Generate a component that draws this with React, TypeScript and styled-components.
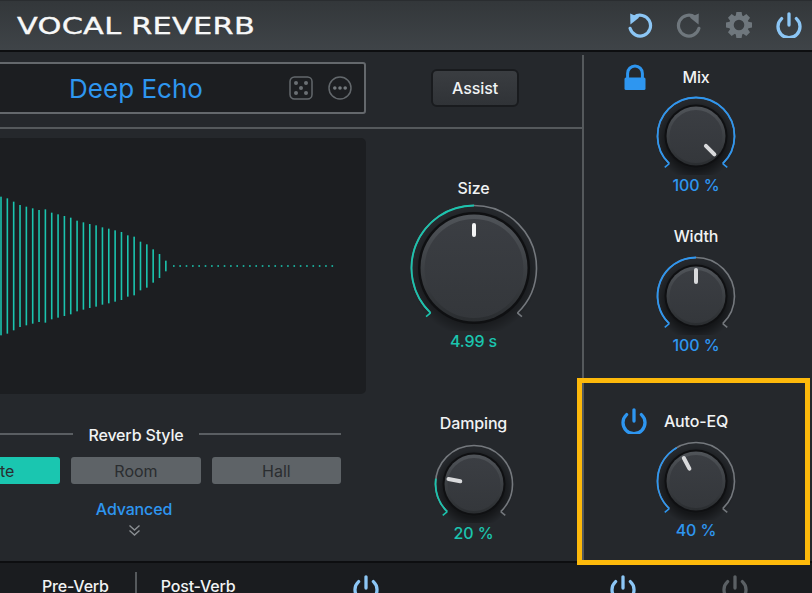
import React, { useId } from "react";
import styled, { createGlobalStyle } from "styled-components";

const TEAL = "#1bc4ae";
const BLUE = "#2e96f0";
const SKY = "#8cc6f5";
const GREY = "#6f777d";

const Global = createGlobalStyle`
  html, body { margin: 0; padding: 0; background: #25282c; }
  body { font-family: Inter, "Liberation Sans", sans-serif; overflow: hidden; }
`;

const Frame = styled.div`
  position: relative;
  width: 812px;
  height: 593px;
  overflow: hidden;
  display: flex;
  flex-direction: column;
  background: #25282c;
  color: #f1f3f4;
`;

const Header = styled.header`
  flex: none;
  height: 52px;
  box-sizing: border-box;
  display: flex;
  align-items: center;
  padding: 0 10px 2px 17px;
  border-top: 1px solid #2a2d30;
  border-bottom: 2px solid #0d0e10;
  background: linear-gradient(180deg, #33373a 0%, #3f4448 100%);
`;

const Logo = styled.div`
  flex: 1;
  padding-top: 2px;
  font-family: "DejaVu Sans", sans-serif;
  font-size: 23px;
  line-height: 28px;
  letter-spacing: 0.2px;
  color: #f7f8f8;
  white-space: nowrap;
  transform-origin: left center;
  transform: scaleX(1.32);
  -webkit-text-stroke: 0.35px #f7f8f8;
`;

const HeaderIcons = styled.div`
  display: flex;
  align-items: center;
  gap: 23px;
`;

const Main = styled.main`
  flex: 1;
  min-height: 0;
  display: flex;
  margin-left: -94px;
`;

const Left = styled.div`
  flex: none;
  width: 676px;
  display: flex;
  flex-direction: column;
`;

const TopRow = styled.div`
  flex: none;
  height: 75px;
  display: flex;
  border-bottom: 2px solid #55595c;
`;

const PresetCell = styled.div`
  flex: none;
  width: 460px;
  padding-top: 10px;
`;

const Preset = styled.div`
  position: relative;
  height: 52px;
  box-sizing: border-box;
  display: flex;
  align-items: center;
  justify-content: center;
  background: #1c1e21;
  border: 2px solid #64686c;
  border-radius: 3px;
  font-size: 26px;
  color: ${BLUE};
`;

const PresetTools = styled.div`
  position: absolute;
  right: 12px;
  top: 12px;
  display: flex;
  gap: 15px;
`;

const AssistCell = styled.div`
  flex: 1;
  display: flex;
  justify-content: center;
  padding: 17px 0 0 2px;
`;

const AssistButton = styled.button`
  width: 88px;
  height: 38px;
  border: 2px solid #191b1e;
  border-radius: 6px;
  background: linear-gradient(180deg, #3a3d41, #303337);
  color: #f1f3f4;
  font: 500 16px Inter, sans-serif;
  letter-spacing: -0.1px;
`;

const BottomRow = styled.div`
  flex: 1;
  display: flex;
`;

const WaveColumn = styled.div`
  flex: none;
  width: 460px;
  padding-top: 9px;
`;

const WavePanel = styled.div`
  height: 256px;
  background: #1c1e21;
  border-radius: 5px;
  overflow: hidden;
`;

const StyleSection = styled.section`
  padding: 31px 25px 0;
`;

const StyleTitle = styled.div`
  display: flex;
  align-items: center;
  gap: 15px;
  font-size: 16px;
  font-weight: 500;
  line-height: 20px;
  letter-spacing: -0.15px;
  &::before, &::after {
    content: "";
    flex: 1;
    height: 2px;
    background: #5a5e62;
    margin-top: -3px;
  }
`;

const StyleButtons = styled.div`
  display: grid;
  grid-template-columns: repeat(3, 1fr);
  gap: 11px;
  margin-top: 12px;
`;

const StyleButton = styled.div<{ $on?: boolean }>`
  height: 27px;
  border-radius: 3px;
  display: flex;
  align-items: center;
  justify-content: center;
  font-size: 16px;
  background: ${(p) => (p.$on ? "#1ac6b0" : "#5e6367")};
  color: #2a2d30;
`;

const Advanced = styled.div`
  display: flex;
  flex-direction: column;
  align-items: center;
  margin-top: 15px;
  padding-right: 4px;
  color: ${BLUE};
  font-size: 16px;
  font-weight: 500;
  line-height: 20px;
  letter-spacing: -0.15px;
`;

const KnobColumn = styled.div`
  flex: 1;
  display: flex;
  flex-direction: column;
  align-items: center;
  padding: 49px 1px 0 0;
`;

const Right = styled.div`
  flex: 1;
  margin-top: 3px;
  padding: 12px 4px 0 0;
  border-left: 2px solid #55595c;
  display: flex;
  flex-direction: column;
`;

const KnobBlock = styled.div<{ $top?: number }>`
  display: flex;
  flex-direction: column;
  align-items: center;
  align-self: stretch;
  margin-top: ${(p) => p.$top ?? 0}px;
`;

const LabelRow = styled.div`
  align-self: stretch;
  display: grid;
  grid-template-columns: 1fr auto 1fr;
  grid-template-rows: 20px;
  align-items: center;
`;

const Label = styled.div`
  font-size: 16px;
  font-weight: 500;
  line-height: 20px;
  letter-spacing: -0.15px;
`;

const IconSlot = styled.div<{ $inset: number }>`
  display: flex;
  padding-left: ${(p) => p.$inset}px;
`;

const DialBox = styled.svg<{ $gap: number }>`
  display: block;
  margin-top: ${(p) => p.$gap}px;
`;

const Value = styled.div<{ $color: string }>`
  font-size: 16px;
  font-weight: 500;
  line-height: 20px;
  letter-spacing: -0.1px;
  color: ${(p) => p.$color};
`;

const Footer = styled.footer`
  flex: none;
  height: 32px;
  box-sizing: border-box;
  display: flex;
  align-items: flex-start;
  padding: 9px 0 0 42px;
  border-top: 2px solid #0d0e10;
  background: #1a1c1f;
  font-size: 16px;
  font-weight: 500;
  letter-spacing: -0.2px;
`;

const FooterTab = styled.div<{ $divider?: boolean }>`
  line-height: 28px;
  ${(p) => p.$divider && `
    margin-left: 26px;
    padding-left: 24px;
    border-left: 2px solid #55595c;
  `}
`;

const FooterPower = styled.div<{ $left: number }>`
  flex: none;
  margin-left: ${(p) => p.$left}px;
  margin-top: 3px;
`;

const Highlight = styled.div`
  position: absolute;
  left: 577px;
  top: 378px;
  width: 233px;
  height: 187px;
  box-sizing: border-box;
  border: 5px solid #fdb90b;
  pointer-events: none;
`;

const pt = (cx: number, cy: number, r: number, deg: number) => {
  const a = (deg * Math.PI) / 180;
  return [cx + r * Math.sin(a), cy - r * Math.cos(a)];
};

const arc = (cx: number, cy: number, r: number, from: number, to: number) => {
  const [x1, y1] = pt(cx, cy, r, from);
  const [x2, y2] = pt(cx, cy, r, to);
  return `M${x1} ${y1}A${r} ${r} 0 ${to - from > 180 ? 1 : 0} 1 ${x2} ${y2}`;
};

type DialProps = {
  big?: boolean;
  color: string;
  fill: number;
  pointer: number;
  pointerColor?: string;
  gap?: number;
};

function Dial({ big, color, fill, pointer, pointerColor = "#d9dadc", gap = 5 }: DialProps) {
  const id = useId().replace(/[^a-zA-Z0-9]/g, "");
  const w = big ? 140 : 90;
  const h = big ? 133 : 84;
  const cx = w / 2;
  const cy = big ? 70 : 45;
  const R = big ? 62.5 : 38.5;
  const ring = big ? 56 : 31.5;
  const rim = big ? 53.5 : 29.5;
  const face = big ? 49.5 : 26.5;
  const [lx, ly] = pt(cx, cy, R, -136);
  const [rx, ry] = pt(cx, cy, R, 136);
  const p1 = big ? 43 : 26;
  const p2 = big ? 33 : 14;
  const [a, b] = pt(cx, cy, p1, pointer);
  const [c, d] = pt(cx, cy, p2, pointer);
  return (
    <DialBox $gap={gap} width={w} height={h} viewBox={`0 0 ${w} ${h}`}>
      <defs>
        <linearGradient id={`${id}r`} x1="0" y1="0" x2="0" y2="1">
          <stop offset="0" stopColor="#505459" />
          <stop offset="1" stopColor="#2a2d30" />
        </linearGradient>
        <linearGradient id={`${id}f`} x1="0" y1="0" x2="0" y2="1">
          <stop offset="0" stopColor="#3b3e43" />
          <stop offset="1" stopColor="#34373b" />
        </linearGradient>
        <radialGradient id={`${id}s`}>
          <stop offset="0.72" stopColor="#000" stopOpacity="0.45" />
          <stop offset="1" stopColor="#000" stopOpacity="0" />
        </radialGradient>
      </defs>
      <circle cx={cx} cy={cy + 5} r={ring + 8} fill={`url(#${id}s)`} />
      <path d={arc(cx, cy, R, -136, 136)} fill="none" stroke="#74787d" strokeWidth="1.6" />
      <path d={arc(cx, cy, R, -136, fill)} fill="none" stroke={color} strokeWidth="1.8" />
      <path d={`M${lx} ${ly}l-4.5 3.6`} fill="none" stroke={color} strokeWidth="1.6" />
      <path d={`M${rx} ${ry}l4.5 3.6`} fill="none" stroke={fill >= 136 ? color : "#74787d"} strokeWidth="1.6" />
      <circle cx={cx} cy={cy} r={ring} fill="#0f1012" />
      <circle cx={cx} cy={cy} r={rim} fill={`url(#${id}r)`} />
      <circle cx={cx} cy={cy + 0.5} r={face} fill={`url(#${id}f)`} />
      <path d={`M${a} ${b}L${c} ${d}`} stroke={pointerColor} strokeWidth="4" strokeLinecap="round" />
    </DialBox>
  );
}

const Power = ({ color, size = 26 }: { color: string; size?: number }) => (
  <svg width={size} height={size} viewBox="0 0 26 26" fill="none" stroke={color} strokeWidth="3.300" strokeLinecap="round">
    <path d="M5.600 6.600a11 11 0 1 0 14.800 0" />
    <path d="M13 1.800v11.200" />
  </svg>
);

const Undo = ({ color, flip }: { color: string; flip?: boolean }) => (
  <svg width="26" height="26" viewBox="0 0 26 26" style={flip ? { transform: "scaleX(-1)" } : undefined}>
    <path d="M7 5.200a10.400 10.400 0 1 1-3.900 11.200" fill="none" stroke={color} strokeWidth="3.200" strokeLinecap="round" />
    <path d="M3.200 1.600 L12.200 5.400 L3.400 12.400 Z" fill={color} />
  </svg>
);

const Gear = ({ color }: { color: string }) => (
  <svg width="28" height="28" viewBox="0 0 28 28">
    <circle cx="14" cy="14" r="7.600" fill="none" stroke={color} strokeWidth="4.600" />
    {[0, 45, 90, 135, 180, 225, 270, 315].map((r) => (
      <path key={r} d="M11.400 1h5.200l.8 4.600h-6.800z" fill={color} transform={`rotate(${r} 14 14)`} />
    ))}
  </svg>
);

const Lock = () => (
  <svg width="22" height="26" viewBox="0 0 22 26">
    <path d="M3.600 15V9.400a7.400 7.400 0 0 1 14.800 0V15" fill="none" stroke={BLUE} strokeWidth="3" />
    <rect x="0.500" y="13.500" width="21" height="12.500" rx="1.500" fill={BLUE} />
  </svg>
);

const Dice = () => (
  <svg width="24" height="24" viewBox="0 0 24 24" fill="#6a6f73">
    <rect x="1" y="1" width="22" height="22" rx="4.500" fill="none" stroke="#63686c" strokeWidth="1.500" />
    <circle cx="7" cy="7" r="2" />
    <circle cx="17" cy="7" r="2" />
    <circle cx="12" cy="12" r="2" />
    <circle cx="7" cy="17" r="2" />
    <circle cx="17" cy="17" r="2" />
  </svg>
);

const More = () => (
  <svg width="24" height="24" viewBox="0 0 24 24" fill="#74797d">
    <circle cx="12" cy="12" r="11" fill="none" stroke="#63686c" strokeWidth="1.500" />
    <circle cx="6.800" cy="12" r="1.800" />
    <circle cx="12" cy="12" r="1.800" />
    <circle cx="17.200" cy="12" r="1.800" />
  </svg>
);

const ChevronMark = styled.svg`
  display: block;
  margin-top: 5px;
`;

const Chevrons = () => (
  <ChevronMark width="13" height="13" viewBox="0 0 13 13" fill="none" stroke="#8a8e92" strokeWidth="1.400">
    <path d="M1.500 1.500 6.500 6l5-4.500" />
    <path d="M1.500 6.500 6.500 11l5-4.500" />
  </ChevronMark>
);

const tops = [20, 25, 35, 45, 50, 55, 60, 58, 68, 73, 78, 83, 92, 97, 102, 106, 112, 116, 121, 126, 136, 140, 155, 163, 178, 192, 212];

const Wave = () => (
  <svg width="460" height="256" viewBox="0 0 460 256">
    {tops.map((t, i) => {
      const half = (228 - t) / 3;
      const x = 95 + i * 6.34;
      return <rect key={i} x={x - 0.8} y={128 - half} width="1.600" height={half * 2} fill={TEAL} />;
    })}
    {Array.from({ length: 26 }, (_, i) => (
      <rect key={i} x={267 + i * 6.34} y="127.200" width="1.600" height="1.600" fill={TEAL} />
    ))}
  </svg>
);

export default function App() {
  return (
    <>
      <Global />
      <Frame>
        <Header>
          <Logo>VOCAL REVERB</Logo>
          <HeaderIcons>
            <Undo color={SKY} />
            <Undo color={GREY} flip />
            <Gear color={GREY} />
            <Power color={SKY} />
          </HeaderIcons>
        </Header>
        <Main>
          <Left>
            <TopRow>
              <PresetCell>
                <Preset>
                  Deep Echo
                  <PresetTools>
                    <Dice />
                    <More />
                  </PresetTools>
                </Preset>
              </PresetCell>
              <AssistCell>
                <AssistButton>Assist</AssistButton>
              </AssistCell>
            </TopRow>
            <BottomRow>
              <WaveColumn>
                <WavePanel>
                  <Wave />
                </WavePanel>
                <StyleSection>
                  <StyleTitle>Reverb Style</StyleTitle>
                  <StyleButtons>
                    <StyleButton $on>Plate</StyleButton>
                    <StyleButton>Room</StyleButton>
                    <StyleButton>Hall</StyleButton>
                  </StyleButtons>
                  <Advanced>
                    Advanced
                    <Chevrons />
                  </Advanced>
                </StyleSection>
              </WaveColumn>
              <KnobColumn>
                <KnobBlock>
                  <Label>Size</Label>
                  <Dial big color={TEAL} fill={0} pointer={0} pointerColor="#f4f5f5" gap={0} />
                  <Value $color={TEAL}>4.99 s</Value>
                </KnobBlock>
                <KnobBlock $top={62}>
                  <Label>Damping</Label>
                  <Dial color={TEAL} fill={-82} pointer={-79} gap={6} />
                  <Value $color={TEAL}>20 %</Value>
                </KnobBlock>
              </KnobColumn>
            </BottomRow>
          </Left>
          <Right>
            <KnobBlock>
              <LabelRow>
                <IconSlot $inset={40}>
                  <Lock />
                </IconSlot>
                <Label>Mix</Label>
              </LabelRow>
              <Dial color={BLUE} fill={136} pointer={135} gap={4} />
              <Value $color={BLUE}>100 %</Value>
            </KnobBlock>
            <KnobBlock $top={31}>
              <Label>Width</Label>
              <Dial color={BLUE} fill={0} pointer={0} />
              <Value $color={BLUE}>100 %</Value>
            </KnobBlock>
            <KnobBlock $top={56}>
              <LabelRow>
                <IconSlot $inset={37}>
                  <Power color={BLUE} />
                </IconSlot>
                <Label>Auto-EQ</Label>
              </LabelRow>
              <Dial color={BLUE} fill={-30} pointer={-28} />
              <Value $color={BLUE}>40 %</Value>
            </KnobBlock>
          </Right>
        </Main>
        <Footer>
          <FooterTab>Pre-Verb</FooterTab>
          <FooterTab $divider>Post-Verb</FooterTab>
          <FooterPower $left={118}>
            <Power color={SKY} />
          </FooterPower>
          <FooterPower $left={231}>
            <Power color={SKY} />
          </FooterPower>
          <FooterPower $left={86}>
            <Power color="#5b6064" />
          </FooterPower>
        </Footer>
        <Highlight />
      </Frame>
    </>
  );
}
